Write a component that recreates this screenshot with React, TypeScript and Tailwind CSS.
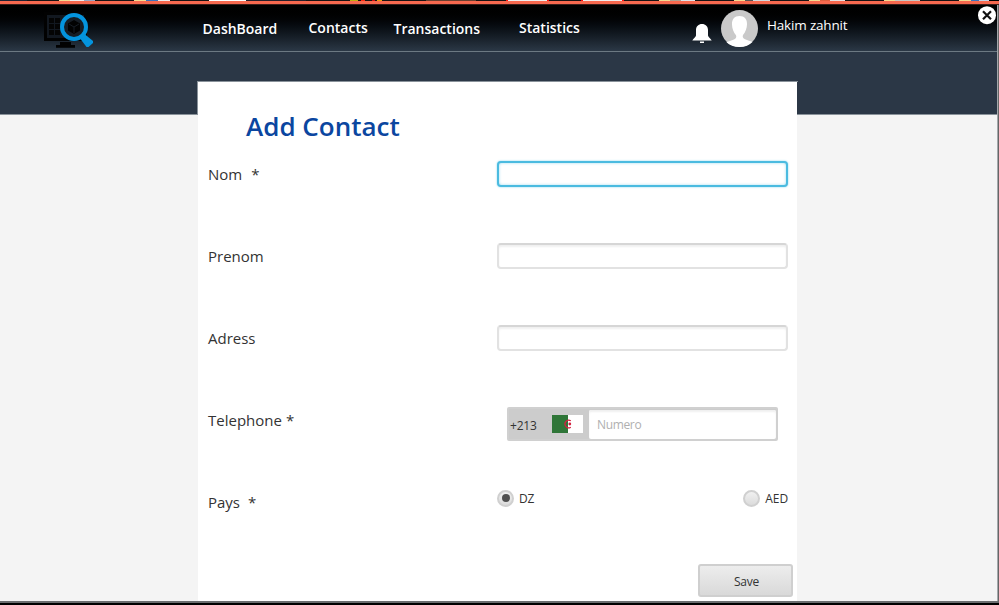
import type { ReactNode } from "react";

const stripPieces: { w: number; c: string }[] = [
  { w: 27, c: "#1d2233" }, { w: 32, c: "#171313" }, { w: 11, c: "#f5dc90" }, { w: 14, c: "#f3eeee" }, { w: 11, c: "#9aa7c4" },
  { w: 39, c: "#171313" }, { w: 12, c: "#f5dc90" }, { w: 12, c: "#3f73bd" }, { w: 12, c: "#f0eeee" }, { w: 39, c: "#171313" },
  { w: 37, c: "#ffffff" }, { w: 60, c: "#26202b" }, { w: 44, c: "#171313" }, { w: 8, c: "#c0b010" }, { w: 3, c: "#171313" },
  { w: 4, c: "#ff2a10" }, { w: 7, c: "#171313" }, { w: 3, c: "#d01010" }, { w: 2, c: "#171313" }, { w: 5, c: "#f0a010" },
  { w: 44, c: "#171313" }, { w: 50, c: "#6b4030" }, { w: 30, c: "#171313" }, { w: 2, c: "#ff1010" }, { w: 39, c: "#f0eeee" },
  { w: 2, c: "#ff1010" }, { w: 32, c: "#171313" }, { w: 2, c: "#ff1010" }, { w: 39, c: "#f0eeee" }, { w: 2, c: "#ff1010" },
  { w: 35, c: "#171313" }, { w: 11, c: "#f5dc90" }, { w: 11, c: "#b0a090" }, { w: 14, c: "#e0e4ea" }, { w: 39, c: "#171313" },
  { w: 11, c: "#f5dc90" }, { w: 8, c: "#555555" }, { w: 17, c: "#d4dbe0" }, { w: 39, c: "#171313" }, { w: 11, c: "#f5dc90" },
  { w: 10, c: "#e06040" }, { w: 15, c: "#e8e0e0" }, { w: 39, c: "#171313" }, { w: 11, c: "#f5dc90" }, { w: 25, c: "#c8c8c4" },
  { w: 39, c: "#171313" }, { w: 12, c: "#f5dc90" }, { w: 8, c: "#3f73bd" }, { w: 10, c: "#c8d4e8" },
];

function Logo() {
  return (
    <svg className="block" width="52" height="38" viewBox="43 11 52 38">
      <rect x="44" y="12" width="43" height="29" fill="#020202" />
      <rect x="47" y="15" width="37" height="23" fill="#121820" />
      <path d="M49 18h5v5h-5zM55 18h5v5h-5zM49 24h5v5h-5zM55 24h5v5h-5zM49 30h5v5h-5zM55 30h5v5h-5z" fill="#040404" />
      <path d="M60 42h11v3h4v2.700h-19v-2.700h4z" fill="#020202" />
      <circle cx="74" cy="27" r="12" fill="#161d25" stroke="#0494de" strokeWidth="4" />
      <path d="M84.500 34L93 41v2l-4.500 4h-2L80.500 39z" fill="#0494de" />
      <path d="M74 20l6 3.500v7L74 34l-6-3.500v-7z" fill="#020202" />
      <path d="M69 24l5 3 5-3M74 27v6" fill="none" stroke="#161d25" strokeWidth="1" />
    </svg>
  );
}

function Bell() {
  return (
    <svg className="mt-[19px] ml-[112px] block shrink-0" width="20" height="20" viewBox="0 0 20 20" fill="#fff">
      <path d="M10 0C6.500 0 4 2.500 4 6v5.500C4 13 1.500 14 .3 16.500h19.400C18.500 14 16 13 16 11.500V6C16 2.500 13.500 0 10 0zM8 17.500h4V19H8z" />
    </svg>
  );
}

function Avatar() {
  return (
    <svg className="mt-[5px] ml-[9px] block shrink-0" width="37" height="37" viewBox="0 0 37 37">
      <circle cx="18.500" cy="18.500" r="18.500" fill="#c9c9c9" />
      <path d="M18.500 6c-5 0-7.700 3.400-7.500 8.400.1 4 1.500 8 4 10.800.8 2-.1 3.300-2 4.200-2.600 1.200-5.500 1.800-7.500 2.800C8.500 35 13 37 18.500 37s10-2 13-5c-2-1-4.900-1.600-7.500-2.800-1.900-.9-2.800-2.200-2-4.200 2.500-2.800 3.900-6.800 4-10.800.2-5-2.500-8.200-7.500-8.200z" fill="#fff" />
    </svg>
  );
}

function Header() {
  return (
    <header className="flex h-[47px] items-start border-b border-[#6c7983] bg-linear-to-b from-black to-[#2b3846] text-[14px] leading-[20px] font-semibold text-white">
      <div className="ml-[43px] w-[159.500px] pt-[6px]"><Logo /></div>
      <nav className="flex whitespace-nowrap">
        <a className="w-[106px] pt-[14px]">DashBoard</a>
        <a className="w-[85px] pt-[13px]">Contacts</a>
        <a className="w-[125.500px] pt-[14px]">Transactions</a>
        <a className="w-[61px] pt-[13px]">Statistics</a>
      </nav>
      <Bell />
      <Avatar />
      <span className="mt-[10px] ml-[9px] w-[82px] text-[13.500px] tracking-[-0.180px] font-normal whitespace-nowrap">Hakim zahnit</span>
      <svg className="mt-px ml-auto block" width="19" height="19" viewBox="0 0 19 19">
        <circle cx="9" cy="9.200" r="9" fill="#fff" />
        <path d="M5 5.200l8 8M13 5.200l-8 8" stroke="#111" strokeWidth="2.200" />
      </svg>
    </header>
  );
}

function Field({ label, star, children }: { label: string; star?: number; children: ReactNode }) {
  return (
    <div className="flex h-[82px] items-start">
      <label className="flex w-[289px] text-[15px] leading-[26px] text-[#333]">
        <span>{label}</span>
        {star !== undefined && <span style={{ marginLeft: star }}>*</span>}
      </label>
      {children}
    </div>
  );
}

const inputBase = "h-[26px] w-[291px] rounded-[4px] border-2 bg-white outline-none";

function Flag() {
  return (
    <svg className="ml-[14px] block shrink-0" width="31" height="18" viewBox="0 0 31 18">
      <rect width="31" height="18" fill="#fff" />
      <rect width="16" height="18" fill="#2f7638" />
      <path d="M18.800 5.800A3.800 3.800 0 1 0 18.800 12.200" fill="none" stroke="#d3213f" strokeWidth="1.200" />
      <circle cx="17.800" cy="9" r="1.400" fill="#d3213f" />
    </svg>
  );
}

function Radio({ label, checked }: { label: string; checked?: boolean }) {
  return (
    <label className="flex items-center text-[12px] leading-[18px] text-[#333]">
      <span className="mr-[5px] flex size-[17px] items-center justify-center rounded-full border-2 border-[#d0d0d0] bg-linear-to-b from-[#f0f0f0] to-[#dcdcdc]">
        {checked && <span className="size-[8px] rounded-full bg-[#505050]" />}
      </span>
      <span className="pt-[2px] tracking-[-0.100px]">{label}</span>
    </label>
  );
}

export default function App() {
  return (
    <div className="flex h-[605px] w-[999px] flex-col overflow-hidden bg-black font-['Open_Sans','Noto_Sans',sans-serif]">
      <div className="flex h-px shrink-0">
        {stripPieces.map((p, i) => <i key={i} className="h-px shrink-0" style={{ width: p.w, background: p.c }} />)}
      </div>
      <div className="h-[4px] shrink-0 border-b border-[#3c1f1b] bg-[#f7694f]" />
      <div className="flex h-[598px] shrink-0 flex-col border-r border-b-2 border-r-[#666] border-b-[#6b6d6f] bg-[#f4f4f4]">
        <div className="flex h-[596px] flex-col border-r border-[#a4a8ac]">
          <Header />
          <div className="h-[63px] shrink-0 border-b border-[#89929a] bg-[#2b3746]" />
          <main className="mt-[-34px] ml-[197px] flex h-[520px] w-[601px] border-t border-[#89929a]">
            <div className="h-[33px] w-px shrink-0 bg-[#89929a]" />
            <div className="-ml-px w-[600px] shrink-0 border-l border-transparent bg-white bg-clip-padding">
              <h1 className="mt-[24px] ml-[48px] h-[41px] text-[26px] leading-[40px] font-semibold whitespace-nowrap text-[#0b46a0]">Add Contact</h1>
              <form className="pt-[14px] pl-[10px]">
                <Field label="Nom" star={9}>
                  <input className={`${inputBase} border-[#4bbbe0] shadow-[0_0_2px_#7fd0ea,inset_0_0_3px_#9edcf0]`} />
                </Field>
                <Field label="Prenom">
                  <input className={`${inputBase} border-[#e2e2e2] border-t-[#d6d6d6] shadow-[inset_0_2px_2px_#f0f0f0]`} />
                </Field>
                <Field label="Adress">
                  <input className={`${inputBase} border-[#e2e2e2] border-t-[#d6d6d6] shadow-[inset_0_2px_2px_#f0f0f0]`} />
                </Field>
                <Field label="Telephone" star={4}>
                  <div className="ml-[10px] flex h-[34px] w-[271px] items-center rounded-[2px] border-2 border-[#d0d0d0] bg-[#cccccc] text-[12px] text-[#333]">
                    <span className="ml-px w-[28px] pt-[3px] tracking-[-0.200px]">+213</span>
                    <Flag />
                    <input placeholder="Numero" className="ml-[6px] h-[29px] min-w-0 flex-1 rounded-[2px] bg-white pt-px pl-[8px] text-[12px] tracking-[-0.350px] shadow-[inset_0_2px_2px_#f0f0f0] outline-none placeholder:text-[#b0b0b0]" />
                  </div>
                </Field>
                <div className="flex h-[75px]">
                  <span className="flex w-[289px] text-[15px] leading-[26px] text-[#333]">Pays<span className="ml-[8px]">*</span></span>
                  <div className="flex h-[18px] w-[291px] justify-between">
                    <Radio label="DZ" checked />
                    <Radio label="AED" />
                  </div>
                </div>
                <button type="button" className="ml-[490px] block h-[33px] w-[95px] rounded-[3px] border-2 border-[#cfcfcf] bg-linear-to-b from-[#ededed] to-[#d9d9d9] pt-[3px] pl-[2px] text-[12px] tracking-[-0.200px] text-[#333]">Save</button>
              </form>
            </div>
          </main>
        </div>
      </div>
    </div>
  );
}
